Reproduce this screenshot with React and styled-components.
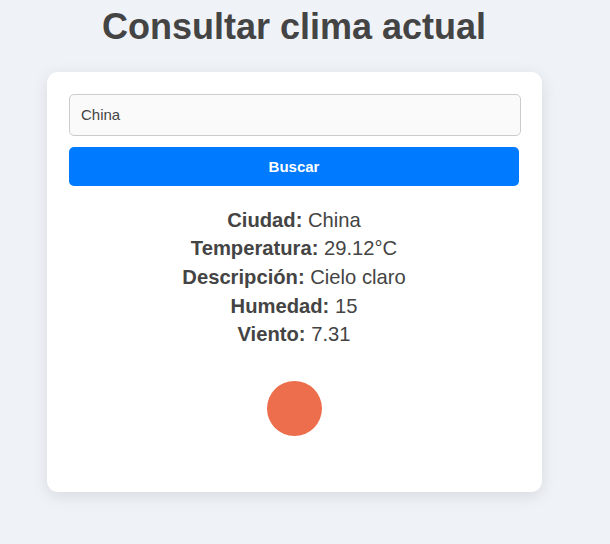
import React from "react";
import styled, { createGlobalStyle } from "styled-components";

const GlobalStyle = createGlobalStyle`
  * { box-sizing: border-box; }
  body {
    margin: 0;
    background: #eff3f8;
    color: #444;
    font-family: "Liberation Sans", Arial, sans-serif;
    overflow: hidden;
  }
`;

const Page = styled.main`
  width: 588px;
  height: 544px;
  display: flex;
  flex-direction: column;
  align-items: center;
`;

const Title = styled.h1`
  margin: 5px 0 24px;
  font-size: 36px;
  line-height: 43px;
  white-space: nowrap;
`;

const Card = styled.section`
  width: 495px;
  height: 420px;
  padding: 22px 21px 22px 22px;
  margin-left: 1px;
  border-radius: 11px;
  background: #fff;
  box-shadow: 0 4px 16px rgba(0, 0, 0, 0.1);
  display: flex;
  flex-direction: column;
`;

const SearchInput = styled.input`
  width: 452px;
  height: 42px;
  padding: 0 11px 1px;
  border: 1px solid #ccc;
  border-radius: 5px;
  background: #fafafa;
  color: #444;
  font: 15px "Liberation Sans", Arial, sans-serif;
  outline: none;
`;

const SearchButton = styled.button`
  width: 450px;
  height: 39px;
  margin-top: 11px;
  padding: 0;
  border: 0;
  border-radius: 5px;
  background: #007bff;
  color: #fff;
  font: bold 15px "Liberation Sans", Arial, sans-serif;
`;

const Weather = styled.div`
  width: 450px;
  margin-top: 19.8px;
  display: flex;
  flex-direction: column;
  align-items: center;
`;

const Reading = styled.p`
  margin: 0;
  font-size: 20.2px;
  line-height: 28.6px;
`;

const SkyIcon = styled.svg`
  width: 110px;
  height: 110px;
  margin-top: 5.2px;
`;

const readings = [
  ["Ciudad", "China"],
  ["Temperatura", "29.12°C"],
  ["Descripción", "Cielo claro"],
  ["Humedad", "15"],
  ["Viento", "7.31"],
];

export default function App() {
  return (
    <>
      <GlobalStyle />
      <Page>
        <Title>Consultar clima actual</Title>
        <Card>
          <SearchInput defaultValue="China" aria-label="Ciudad" />
          <SearchButton>Buscar</SearchButton>
          <Weather>
            {readings.map(([label, value]) => (
              <Reading key={label}>
                <strong>{label}:</strong> {value}
              </Reading>
            ))}
            <SkyIcon viewBox="0 0 110 110" role="img" aria-label="Cielo claro">
              <circle cx="55.5" cy="54.5" r="27.5" fill="#ec6e4c" />
            </SkyIcon>
          </Weather>
        </Card>
      </Page>
    </>
  );
}
